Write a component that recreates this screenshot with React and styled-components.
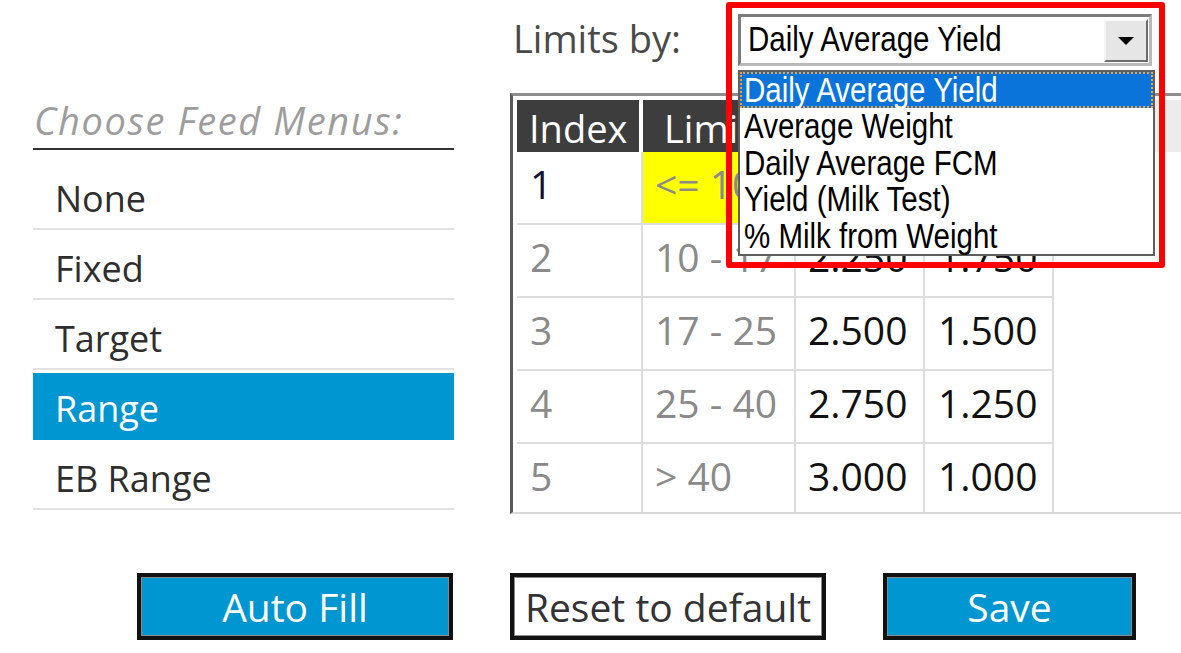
import React from "react";
import styled, { createGlobalStyle, css } from "styled-components";

const GlobalStyle = createGlobalStyle`
  html, body { margin: 0; padding: 0; background: #fff; }
  body { font-family: "Open Sans", "Liberation Sans", sans-serif; }
  * { box-sizing: border-box; }
`;

const BLUE = "#0096d1";

const Page = styled.div`
  width: 1181px;
  height: 653px;
  overflow: hidden;
  background: #fff;
  display: flex;
  flex-direction: column;
`;

const Main = styled.div`
  display: flex;
  align-items: flex-start;
`;

/* ---------- left panel ---------- */
const LeftPanel = styled.div`
  width: 421px;
  margin-left: 33px;
  margin-top: 93px;
  flex: none;
`;

const Heading = styled.div`
  height: 57px;
  line-height: 55px;
  border-bottom: 2px solid #333;
  font-size: 38px;
  letter-spacing: 1.6px;
  font-style: italic;
  color: #9d9d9d;
  padding-left: 1px;
  white-space: nowrap;
`;

const MenuList = styled.div`
  padding-top: 10px;
`;

const MenuItem = styled.div`
  height: 70px;
  border-bottom: 2px solid #e2e2e2;
  padding: 10px 0 0 22px;
  line-height: 58px;
  font-size: 36px;
  color: #2e2e2e;
  ${(p) =>
    p.$selected &&
    css`
      background: linear-gradient(#fff 0 3px, ${BLUE} 3px);
      border-bottom-color: ${BLUE};
      color: #fff;
    `}
`;

/* ---------- right panel ---------- */
const RightPanel = styled.div`
  margin-left: 56px;
  flex: 1;
  min-width: 0;
`;

const LimitsRow = styled.div`
  height: 93px;
  display: flex;
  align-items: flex-start;
  padding-top: 12px;
`;

const Label = styled.div`
  width: 228px;
  padding-left: 3px;
  line-height: 52px;
  font-size: 38px;
  color: #4a4a4a;
  flex: none;
`;

const SelectWrap = styled.div`
  position: relative;
  width: 414px;
  height: 52px;
  margin-top: 2px;
  flex: none;
`;

const SelectBox = styled.div`
  width: 100%;
  height: 100%;
  border: 3px solid;
  border-color: #7c7c7c #b8b8b8 #b8b8b8 #7c7c7c;
  background: #fff;
  display: flex;
  align-items: center;
  justify-content: space-between;
  padding-left: 7px;
`;

const OptText = styled.span`
  display: inline-block;
  font-family: "Liberation Sans", Arial, sans-serif;
  font-size: 29.5px;
  transform: scaleY(1.18);
  transform-origin: 0 60%;
  white-space: nowrap;
`;

const ArrowButton = styled.div`
  width: 44px;
  height: 43px;
  margin-right: 1px;
  background: #e6e6e6;
  border: 2px solid;
  border-color: #fafafa #6c6c6c #6c6c6c #f4f4f4;
  display: flex;
  align-items: center;
  justify-content: center;
`;

const Triangle = styled.span`
  width: 0;
  height: 0;
  border-left: 8px solid transparent;
  border-right: 8px solid transparent;
  border-top: 8px solid #000;
  margin-top: 2px;
`;

const OptionList = styled.ul`
  position: absolute;
  top: 56px;
  left: 0;
  width: 417px;
  height: 186px;
  margin: 0;
  padding: 0;
  list-style: none;
  background: #fff;
  border: 2px solid #5e5e5e;
  z-index: 2;
`;

const Option = styled.li`
  height: 36.4px;
  line-height: 38px;
  padding-left: 4px;
  color: #000;
  ${(p) =>
    p.$active &&
    css`
      background: #0a74da;
      color: #fff;
      outline: 2px dotted #f0a040;
      outline-offset: -2px;
    `}
`;

const Highlight = styled.div`
  position: absolute;
  left: -12px;
  top: -12px;
  width: 439px;
  height: 266px;
  border: 6px solid #ff0000;
  border-radius: 3px;
  pointer-events: none;
  z-index: 3;
`;

/* ---------- grid ---------- */
const COLS = "126px 153px 129px 129px 1fr";

const Grid = styled.div`
  height: 421px;
  border-top: 3px solid #8e8e8e;
  border-left: 3px solid #5a5a5a;
  border-bottom: 2px solid #d9d9d9;
  padding: 4px 0 0 4px;
  overflow: hidden;
`;

const HeaderRow = styled.div`
  display: grid;
  grid-template-columns: ${COLS};
  height: 52px;
`;

const HeaderCell = styled.div`
  background: ${(p) => (p.$filler ? "#ececec" : "#3d3d3d")};
  border-right: ${(p) => (p.$filler ? "0" : "4px solid #fff")};
  color: #fff;
  font-size: 38px;
  line-height: 52px;
  padding: 2px 0 0 ${(p) => p.$pad || 12}px;
  white-space: nowrap;
`;

const BodyRow = styled.div`
  display: grid;
  grid-template-columns: ${COLS};
  height: 73px;
`;

const Cell = styled.div`
  height: 73px;
  border-right: ${(p) => (p.$filler ? "0" : "2px solid #dddddd")};
  border-bottom: ${(p) => (p.$filler ? "0" : "2px solid #dddddd")};
  background: ${(p) => (p.$yellow ? "#ffff00" : "#fff")};
  color: ${(p) => p.$color || "#111"};
  font-size: 39px;
  line-height: 63px;
  padding-left: ${(p) => p.$pad || 13}px;
  white-space: nowrap;
  overflow: hidden;
`;

/* ---------- buttons ---------- */
const ButtonRow = styled.div`
  display: flex;
  gap: 57px;
  padding-left: 137px;
  margin-top: 59px;
`;

const Button = styled.button`
  height: 67px;
  width: ${(p) => p.$w}px;
  border: 4px solid #111;
  box-shadow: inset 0 0 0 1px #8a8a8a;
  background: ${(p) => (p.$primary ? BLUE : "#fff")};
  color: ${(p) => (p.$primary ? "#fff" : "#333")};
  font-family: "Open Sans", sans-serif;
  font-size: 39px;
  line-height: 57px;
  padding: 0;
  white-space: nowrap;
`;

const menus = ["None", "Fixed", "Target", "Range", "EB Range"];
const options = [
  "Daily Average Yield",
  "Average Weight",
  "Daily Average FCM",
  "Yield (Milk Test)",
  "% Milk from Weight",
];
const rows = [
  { idx: "1", limit: "<= 10", a: "2.000", b: "2.000", current: true },
  { idx: "2", limit: "10 - 17", a: "2.250", b: "1.750" },
  { idx: "3", limit: "17 - 25", a: "2.500", b: "1.500" },
  { idx: "4", limit: "25 - 40", a: "2.750", b: "1.250" },
  { idx: "5", limit: "> 40", a: "3.000", b: "1.000" },
];

export default function App() {
  return (
    <Page>
      <GlobalStyle />
      <Main>
        <LeftPanel>
          <Heading>Choose Feed Menus:</Heading>
          <MenuList>
            {menus.map((m) => (
              <MenuItem key={m} $selected={m === "Range"}>
                {m}
              </MenuItem>
            ))}
          </MenuList>
        </LeftPanel>

        <RightPanel>
          <LimitsRow>
            <Label>Limits by:</Label>
            <SelectWrap>
              <SelectBox>
                <OptText>Daily Average Yield</OptText>
                <ArrowButton>
                  <Triangle />
                </ArrowButton>
              </SelectBox>
              <OptionList>
                {options.map((o, i) => (
                  <Option key={o} $active={i === 0}>
                    <OptText>{o}</OptText>
                  </Option>
                ))}
              </OptionList>
              <Highlight />
            </SelectWrap>
          </LimitsRow>

          <Grid>
            <HeaderRow>
              <HeaderCell>Index</HeaderCell>
              <HeaderCell $pad={21}>Limit</HeaderCell>
              <HeaderCell />
              <HeaderCell />
              <HeaderCell $filler />
            </HeaderRow>
            {rows.map((r) => (
              <BodyRow key={r.idx}>
                <Cell $color={r.current ? "#0d1033" : "#8a8a8a"}>{r.idx}</Cell>
                <Cell $color="#8a8a8a" $pad={12} $yellow={r.current}>
                  {r.limit}
                </Cell>
                <Cell $pad={12}>{r.a}</Cell>
                <Cell>{r.b}</Cell>
                <Cell $filler />
              </BodyRow>
            ))}
          </Grid>
        </RightPanel>
      </Main>

      <ButtonRow>
        <Button $primary $w={316}>Auto Fill</Button>
        <Button $w={316}>Reset to default</Button>
        <Button $primary $w={253}>Save</Button>
      </ButtonRow>
    </Page>
  );
}
